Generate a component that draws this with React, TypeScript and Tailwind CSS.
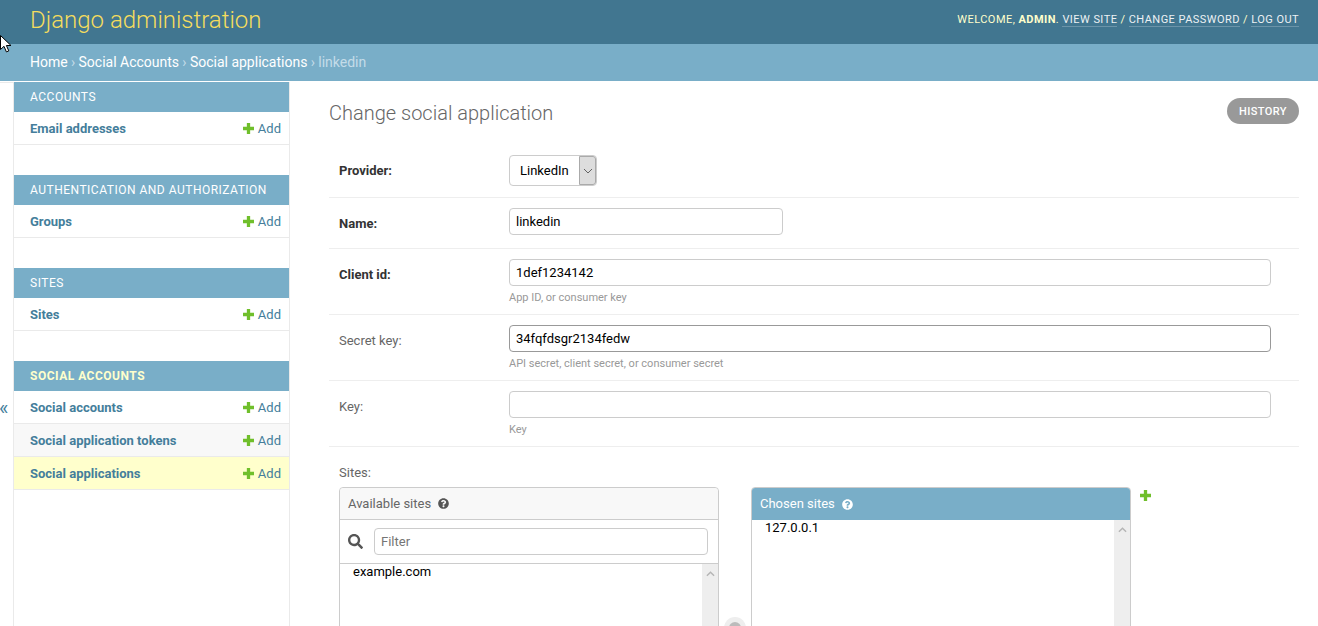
import type { ReactNode } from 'react'
import { FaQuestionCircle, FaSearch } from 'react-icons/fa'

const SECTIONS = [
  { title: 'Accounts', models: ['Email addresses'] },
  { title: 'Authentication and Authorization', models: ['Groups'] },
  { title: 'Sites', models: ['Sites'] },
  {
    title: 'Social Accounts',
    current: true,
    models: ['Social accounts', 'Social application tokens', 'Social applications'],
  },
]

function PlusIcon({ className }: { className: string }) {
  return (
    <svg viewBox="1 1 10 10" className={className}>
      <path d="M4.5 1h3v3.5H11v3H7.5V11h-3V7.5H1v-3h3.5z" fill="#70bf2b" />
    </svg>
  )
}

function Section({ title, models, current }: { title: string; models: string[]; current?: boolean }) {
  return (
    <div className="mb-[30px]">
      <div
        className={`flex h-[30px] items-center bg-[#79aec8] pl-[16px] text-[12px] tracking-[0.5px] uppercase ${
          current ? 'font-bold text-[#ffffcc]' : 'text-white'
        }`}
      >
        {title}
      </div>
      {models.map((m) => (
        <div
          key={m}
          className={`flex h-[33px] items-center justify-between border-b border-[#eaeaea] pt-[2px] pr-[8px] pl-[16px] text-[13px] text-[#447e9b] ${
            m === 'Social applications' ? 'bg-[#ffffcc]' : m === 'Social application tokens' ? 'bg-[#f8f8f8]' : ''
          }`}
        >
          <span className="font-bold">{m}</span>
          <span className="flex items-center gap-[4px]">
            <PlusIcon className="mb-[2px] h-[11px] w-[11px]" />
            Add
          </span>
        </div>
      ))}
    </div>
  )
}

function Row({ label, bold, height, help, children }: { label: string; bold?: boolean; height: string; help?: string; children: ReactNode }) {
  return (
    <div className={`flex border-b border-[#eeeeee] px-[10px] pt-[10px] ${height}`}>
      <label className={`w-[170px] shrink-0 pt-[6px] text-[13px] text-[#333333] ${bold ? 'font-bold' : 'text-[#666666]'}`}>
        {label}
      </label>
      <div>
        {children}
        {help && <p className="mt-[5px] text-[11px] leading-[13px] text-[#999999]">{help}</p>}
      </div>
    </div>
  )
}

function TextInput({ value, width, focused }: { value: string; width: string; focused?: boolean }) {
  return (
    <input
      readOnly
      value={value}
      className={`block h-[27px] rounded-[4px] border bg-white px-[6px] text-[13px] text-black outline-none ${width} ${
        focused ? 'border-[#999999]' : 'border-[#cccccc]'
      }`}
    />
  )
}

function Scrollbar() {
  return (
    <div className="flex w-[16px] shrink-0 justify-center bg-[#eeeeee] pt-[7px]">
      <svg viewBox="0 0 10 6" className="h-[6px] w-[9px]">
        <path d="M1 5l4-4 4 4" fill="none" stroke="#b5b5b5" strokeWidth="1.6" />
      </svg>
    </div>
  )
}

export default function App() {
  return (
    <div className="relative h-[626px] overflow-hidden bg-white font-[Roboto,sans-serif] text-[13px]">
      <header className="flex h-[44px] items-center justify-between bg-[#417690] pr-[19px] pb-[4px] pl-[30px] text-[#ffffcc]">
        <h1 className="text-[24px] font-light text-[#f5dd5d]">Django administration</h1>
        <div className="text-[11px] tracking-[0.45px] uppercase">
          Welcome, <strong className="font-bold">admin</strong>.{' '}
          <a className="border-b border-[#ffffff40] text-[#ffffff] opacity-90">View site</a> /{' '}
          <a className="border-b border-[#ffffff40] text-[#ffffff] opacity-90">Change password</a> /{' '}
          <a className="border-b border-[#ffffff40] text-[#ffffff] opacity-90">Log out</a>
        </div>
      </header>
      <nav className="flex h-[37px] items-center bg-[#79aec8] pl-[30px] text-[14px] text-[#c4dce8]">
        <a className="text-white">Home</a>
        <span className="mx-[3.3px]">›</span>
        <a className="text-white">Social Accounts</a>
        <span className="mx-[3.3px]">›</span>
        <a className="text-white">Social applications</a>
        <span className="mx-[3.3px]">›</span>
        linkedin
      </nav>

      <div className="flex pt-[1px]">
        <div className="w-[13px] shrink-0 border-t border-[#eaeaea] pt-[313px] text-[20px] leading-[24px] text-[#447e9b]">
          <span className="-ml-[1px] block">«</span>
        </div>
        <aside className="h-[544px] w-[277px] shrink-0 border-x border-[#eaeaea]">
          {SECTIONS.map((s) => (
            <Section key={s.title} {...s} />
          ))}
        </aside>

        <main className="min-w-0 flex-1 pr-[19px] pl-[39px]">
          <div className="flex h-[63px] items-start justify-between pt-[16px]">
            <h2 className="text-[20px] leading-[30px] font-light text-[#666666]">Change social application</h2>
            <a className="flex h-[26px] w-[72px] items-center justify-center rounded-[15px] bg-[#999999] pt-[2px] text-[11px] font-medium tracking-[0.4px] text-white uppercase">
              History
            </a>
          </div>

          <Row label="Provider:" bold height="h-[53px]">
            <div className="flex h-[31px] w-[88px] items-center rounded-[4px] border border-[#cccccc] pl-[10px] text-[13px] text-black">
              <span className="flex-1">LinkedIn</span>
              <span className="flex h-full w-[17px] items-center justify-center rounded-r-[3px] border border-[#aaaaaa] bg-[#dddddd]">
                <svg viewBox="0 0 10 6" className="h-[6px] w-[10px]">
                  <path d="M1 1l4 4 4-4" fill="none" stroke="#555555" strokeWidth="0.9" />
                </svg>
              </span>
            </div>
          </Row>
          <Row label="Name:" bold height="h-[51px]">
            <TextInput value="linkedin" width="w-[274px]" />
          </Row>
          <Row label="Client id:" bold height="h-[66px]" help="App ID, or consumer key">
            <TextInput value="1def1234142" width="w-[762px]" />
          </Row>
          <Row label="Secret key:" height="h-[66px]" help="API secret, client secret, or consumer secret">
            <TextInput value="34fqfdsgr2134fedw" width="w-[762px]" focused />
          </Row>
          <Row label="Key:" height="h-[66px]" help="Key">
            <TextInput value="" width="w-[762px]" />
          </Row>

          <div className="px-[10px] pt-[18px]">
            <div className="mb-[6px] h-[16px] text-[13px] leading-[16px] text-[#666666]">Sites:</div>
            <div className="flex items-start">
              <div className="w-[380px] shrink-0 rounded-t-[4px] border border-[#cccccc]">
                <div className="flex h-[32px] items-center gap-[7px] rounded-t-[4px] border-b border-[#cccccc] bg-[#f8f8f8] pl-[8px] text-[13px] text-[#666666]">
                  Available sites
                  <FaQuestionCircle className="h-[11px] w-[11px] text-[#555555]" />
                </div>
                <div className="flex h-[44px] items-center gap-[11px] border-b border-[#cccccc] pr-[10px] pl-[8px]">
                  <FaSearch className="h-[15px] w-[15px] shrink-0 text-[#555555]" />
                  <input
                    readOnly
                    placeholder="Filter"
                    className="h-[27px] min-w-0 flex-1 rounded-[4px] border border-[#cccccc] px-[6px] text-[13px] outline-none placeholder:text-[#757575]"
                  />
                </div>
                <div className="flex h-[200px]">
                  <div className="flex-1 pl-[13px] text-[13px] leading-[16px] text-black">example.com</div>
                  <Scrollbar />
                </div>
              </div>

              <div className="flex w-[32px] shrink-0 justify-center pt-[130px]">
                <span className="flex h-[22px] w-[22px] justify-center rounded-full bg-[#eeeeee] pt-[5px]">
                  <span className="h-[12px] w-[12px] rounded-full bg-[#bbbbbb]" />
                </span>
              </div>

              <div className="w-[380px] shrink-0 rounded-t-[4px] border border-[#cccccc]">
                <div className="flex h-[32px] items-center gap-[7px] rounded-t-[3px] bg-[#79aec8] pl-[8px] text-[13px] text-white">
                  Chosen sites
                  <FaQuestionCircle className="h-[11px] w-[11px] text-white" />
                </div>
                <div className="flex h-[200px]">
                  <div className="flex-1 pl-[13px] text-[13px] leading-[16px] text-black">127.0.0.1</div>
                  <Scrollbar />
                </div>
              </div>

              <PlusIcon className="mt-[3px] ml-[9px] h-[11px] w-[11px]" />
            </div>
          </div>
        </main>
      </div>

      {/* mouse cursor caught in the capture */}
      <svg viewBox="0 0 12 19" className="absolute top-[35px] left-0 h-[19px] w-[12px]">
        <path d="M0.5 0.5v14l3.5-3.2 2.4 5.6 2.4-1-2.4-5.4h4.6z" fill="#ffffff" stroke="#000000" strokeWidth="1" />
      </svg>
    </div>
  )
}
